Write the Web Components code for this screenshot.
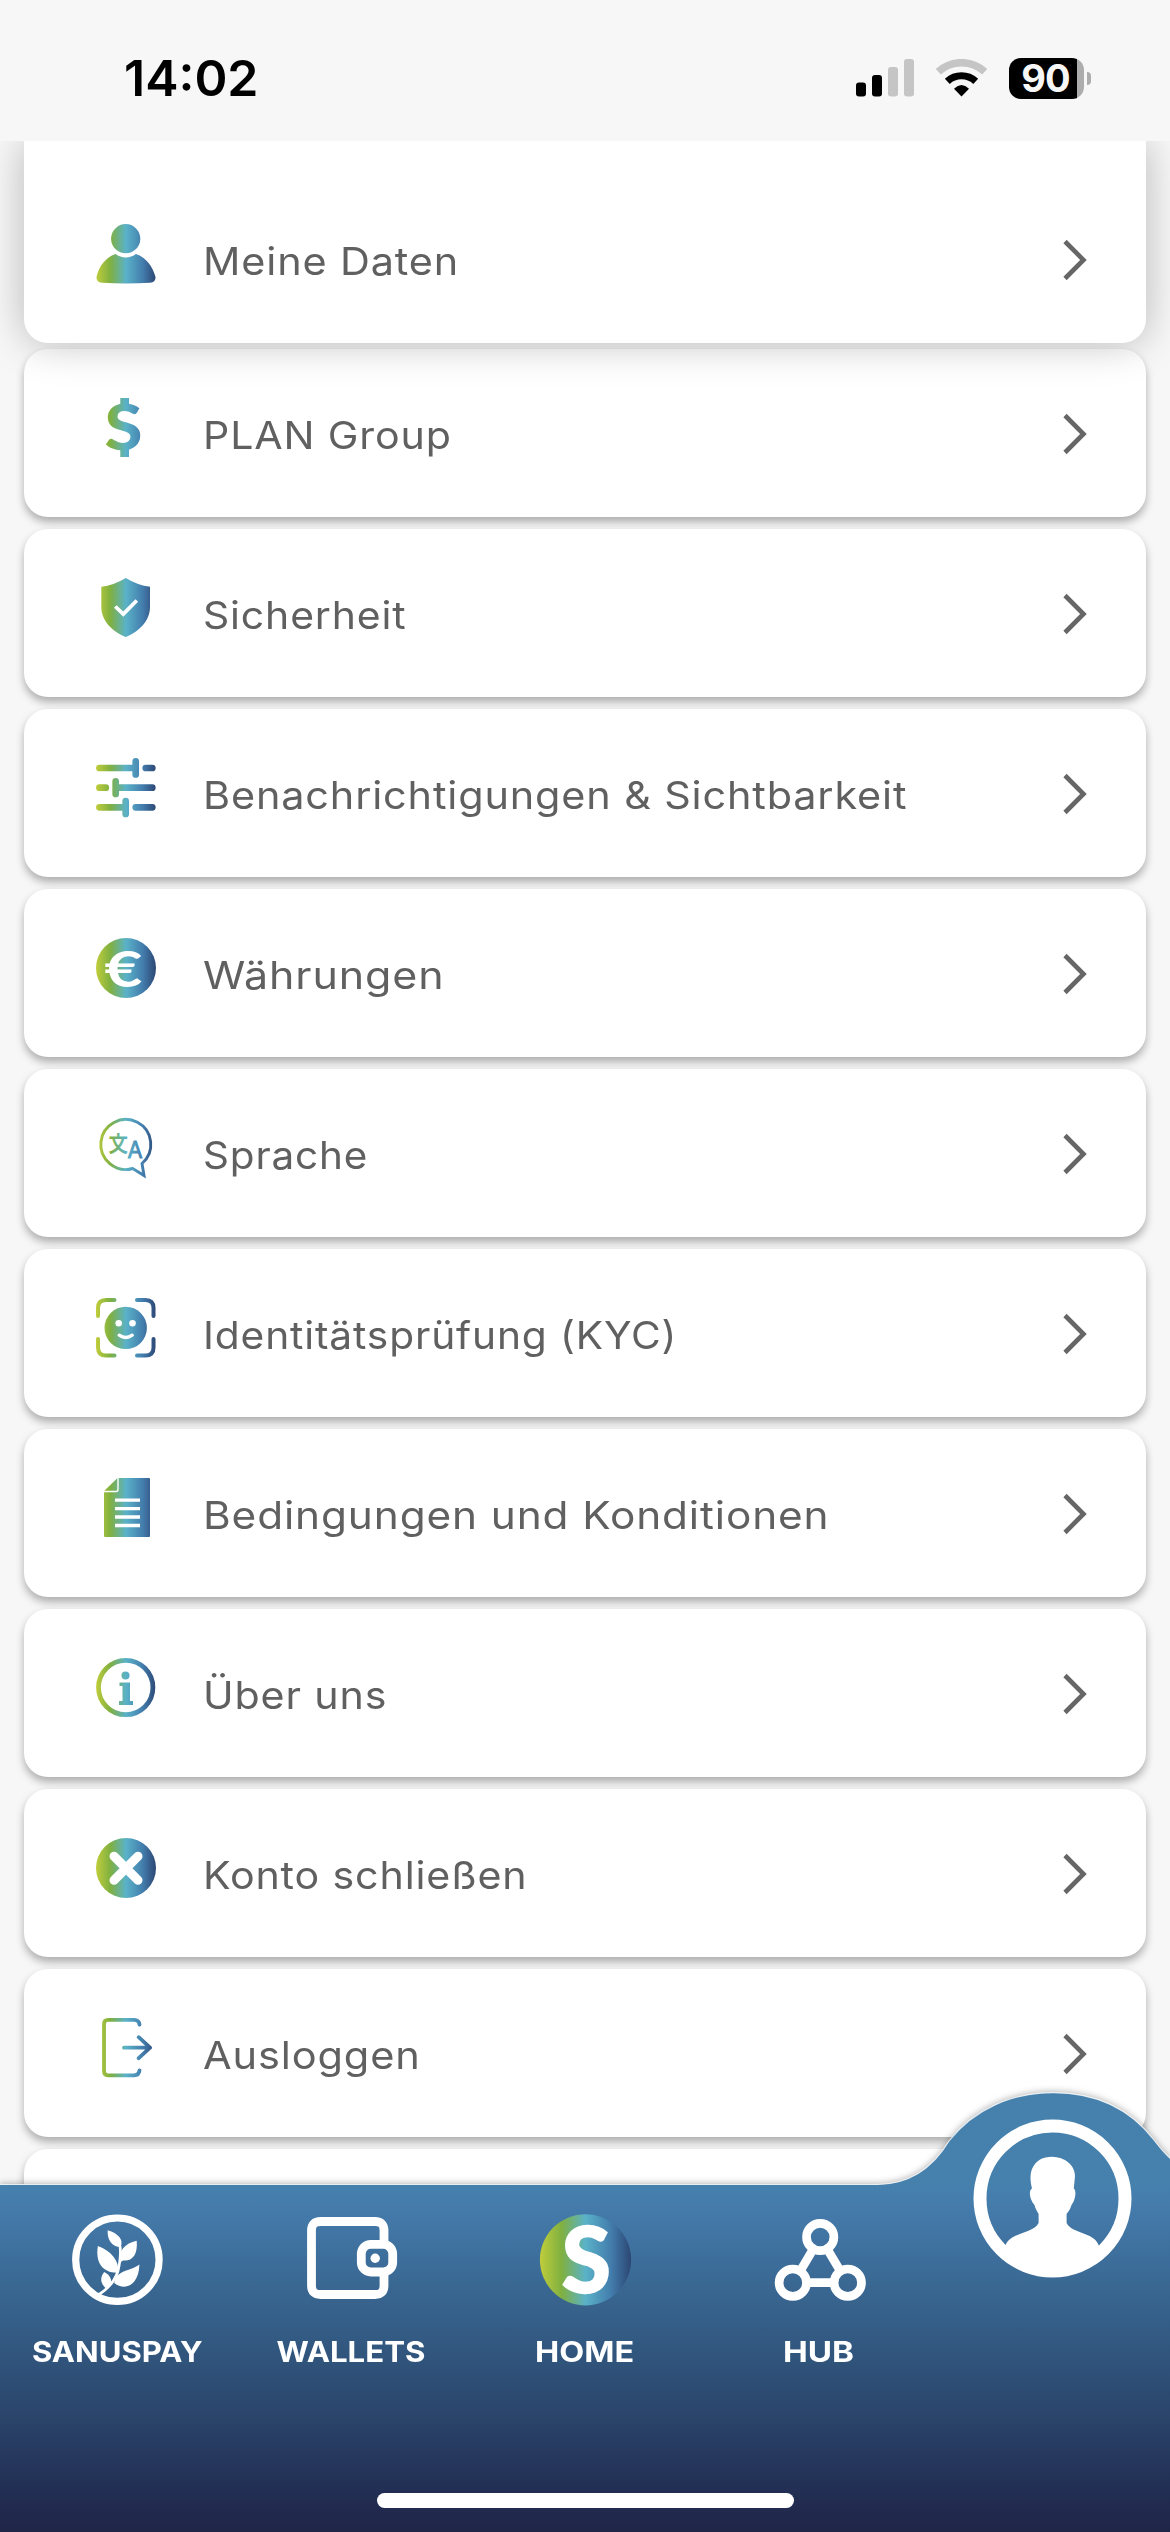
<!DOCTYPE html>
<html lang="de">
<head>
<meta charset="utf-8">
<title>Profil</title>
<style>
  html, body {
    margin: 0;
    height: 2532px;
    overflow: hidden;
    background: #f7f7f7;
  }
  body {
    font-family: Inter, "Noto Sans", sans-serif;
  }
</style>
</head>
<body>
<app-shell>
  <status-bar slot="status" time="14:02" battery="90"></status-bar>
  <settings-row icon="person" width="256" lead>Meine Daten</settings-row>
  <settings-row icon="dollar" width="249">PLAN Group</settings-row>
  <settings-row icon="shield" width="203">Sicherheit</settings-row>
  <settings-row icon="sliders" width="704">Benachrichtigungen &amp; Sichtbarkeit</settings-row>
  <settings-row icon="euro" width="241">Währungen</settings-row>
  <settings-row icon="language" width="165">Sprache</settings-row>
  <settings-row icon="face" width="474">Identitätsprüfung (KYC)</settings-row>
  <settings-row icon="document" width="627">Bedingungen und Konditionen</settings-row>
  <settings-row icon="info" width="184">Über uns</settings-row>
  <settings-row icon="close" width="324">Konto schließen</settings-row>
  <settings-row icon="logout" width="218">Ausloggen</settings-row>
  <settings-row></settings-row>
  <tab-bar slot="tabs">
    <tab-item icon="plant" width="171">SANUSPAY</tab-item>
    <tab-item icon="wallet" width="149">WALLETS</tab-item>
    <tab-item icon="home" width="99">HOME</tab-item>
    <tab-item icon="hub" width="71">HUB</tab-item>
    <app-icon slot="profile" name="profile" size="160"></app-icon>
  </tab-bar>
</app-shell>

<script>
// Row icons are drawn on a 60 grid, tab icons on 91, the profile badge on 160.
const icons = {
  person: [60, `
    <circle cx="29.7" cy="14.7" r="14.6"/>
    <path d="M19.5 30C25.5 34.5 34 34.5 40 30C50 33.5 56.5 42 59.5 53Q60 58.3 54 58.8Q30 60 6 58.8Q0 58.3 .5 53C3 42 9.5 33.5 19.5 30Z"/>`],
  dollar: [60, `
    <path d="M24.3 0h8.7v9h-8.7zM24.3 50h8.7v9h-8.7z"/>
    <text x="8.5" y="52" font-family="Lato" font-weight="900" font-size="62" textLength="38" lengthAdjust="spacingAndGlyphs">S</text>`],
  shield: [60, `
    <path d="M29.8 0Q42 7.5 54 8.7V29C54 43 43 53.5 29.8 59C16.5 53.5 5.3 43 5.3 29V8.7Q17.5 7.5 29.8 0Z"/>
    <path d="M19.3 28.5l8 7.7l13.5-13.7" fill="none" stroke="#fff" stroke-width="3.8"/>`],
  sliders: [60, `
    <g fill="none" stroke="url(#g)" stroke-width="6.7" stroke-linecap="round">
      <path d="M3.4 10H39.7M39.7 3.4V16.5M49.7 10H56.3"/>
      <path d="M3.4 29.7H9.8M19.7 23.3V36M19.7 29.7H56.3"/>
      <path d="M3.4 49.3H29.7M29.7 43.2V56M39.7 49.3H56.3"/>
    </g>`],
  euro: [60, `
    <circle cx="30" cy="30" r="30"/>
    <text x="8.5" y="48.5" fill="#fff" font-family="Lato" font-weight="700" font-size="50" textLength="38" lengthAdjust="spacingAndGlyphs">€</text>`],
  language: [60, `
    <path d="M46 45.5A25 25 0 1 0 36.7 50.5L48 57.5Z" fill="none" stroke="url(#g)" stroke-width="2.9"/>
    <g stroke="url(#g)" stroke-width=".9">
      <text x="13" y="33" font-family="Noto Sans CJK JP" font-size="21" textLength="18.5" lengthAdjust="spacingAndGlyphs">文</text>
      <text x="32" y="40" font-family="Liberation Sans" font-size="23" textLength="14" lengthAdjust="spacingAndGlyphs">A</text>
    </g>`],
  face: [60, `
    <path d="M2 18V10Q2 2 10 2H18.5M41 2H49.5Q57.5 2 57.5 10V18M57.5 41V49.5Q57.5 57.5 49.5 57.5H41M18.5 57.5H10Q2 57.5 2 49.5V41" fill="none" stroke="url(#g)" stroke-width="4" stroke-linecap="round"/>
    <circle cx="29.7" cy="29.9" r="21.2"/>
    <g fill="#fff"><circle cx="22.7" cy="25.3" r="3.3"/><circle cx="36.5" cy="25.3" r="3.3"/></g>
    <path d="M23.2 37.2Q29.7 41.8 36.2 37.2" fill="none" stroke="#fff" stroke-width="3.4" stroke-linecap="round"/>`],
  document: [60, `
    <path d="M21.5 0H53Q54 0 54 1V58Q54 59 53 59H9Q8 59 8 58V13Z"/>
    <g fill="none" stroke="#fff">
      <path d="M22 0V11.5Q22 13.5 20 13.5H8" stroke-width="1.4"/>
      <path d="M19 22.2H44M19 30.7H44M19 39H44M19 47.5H44" stroke-width="3.3"/>
    </g>`],
  info: [60, `
    <circle cx="29.7" cy="29.5" r="27.2" fill="none" stroke="url(#g)" stroke-width="4.8"/>
    <circle cx="29.5" cy="17.5" r="4"/>
    <path d="M23.5 24.5H34V43H37V47H23V43H26.5V28H23.5Z"/>`],
  close: [60, `
    <circle cx="30" cy="30" r="30"/>
    <path d="M18 18.3L42 42.3M42 18.3L18 42.3" stroke="#fff" stroke-width="9" stroke-linecap="round"/>`],
  logout: [60, `
    <path d="M43.5 6.7Q43 1.8 38 1.8H12Q8 1.8 8 6V53Q8 57.3 12 57.3H38Q43 57.3 43.5 52.3M28 29.7H54M42.7 19.2L54 29.7L42.7 40.2" fill="none" stroke="url(#g)" stroke-width="3.8" stroke-linecap="round" stroke-linejoin="round"/>`],
  plant: [91, `
    <circle cx="45.4" cy="45.7" r="41.7" fill="none" stroke="#fff" stroke-width="7.2"/>
    <g fill="#fff">
      <path d="M35.7 16.3C46 19 52 26 48.6 33C40 33 35 26 35.7 16.3Z"/>
      <path d="M25.9 32C39 37 47 46 46.5 58.7C31 59.5 23 49 25.9 32Z"/>
      <path d="M64.7 26.7C66 41 60 47.5 51 46.5L47.5 49C46 37 53 29 64.7 26.7Z"/>
      <path d="M67.4 50.5C67 70 54 78 42.2 69C45 55 58 58 67.4 50.5Z"/>
      <path d="M32.2 58C38 61 41 66 38 72L33.5 74C28 69 28 63 32.2 58Z"/>
    </g>
    <path d="M27 80.5C37 74 43 67 46 57C48 48 49 39 48 32" fill="none" stroke="#fff" stroke-width="2.7"/>`],
  wallet: [91, `
    <g fill="none" stroke="#fff" stroke-width="8.8">
      <path d="M78 27V16.5Q78 7.5 69 7.5H14.500Q5.500 7.500 5.500 16.5V71.5Q5.500 80.5 14.500 80.5H69Q78 80.5 78 71.5V61"/>
      <rect x="55.3" y="30.3" width="31.4" height="27.7" rx="9.500"/>
    </g>
    <circle cx="69.2" cy="44.3" r="4.7" fill="#fff"/>`],
  home: [91, `
    <circle cx="45.5" cy="45.8" r="45.6"/>
    <text x="21.5" y="79.2" fill="#fff" stroke="#fff" stroke-width="1.5" font-family="Lato" font-weight="900" font-size="92" textLength="49.5" lengthAdjust="spacingAndGlyphs">S</text>`],
  hub: [91, `
    <g fill="none" stroke="#fff" stroke-width="8.7">
      <circle cx="46.2" cy="23" r="13.7"/>
      <circle cx="18.8" cy="68.7" r="13.7"/>
      <circle cx="73.8" cy="68.7" r="13.7"/>
      <path d="M39 35.5L26.5 56.5M53.5 35.5L66 56.5M32.5 68.7H60"/>
    </g>`],
  profile: [160, `
    <circle cx="79.5" cy="79.5" r="72.5" fill="none" stroke="#fff" stroke-width="13"/>
    <path fill="#fff" d="M79 37.7C92 38 102 46 102 57L100.8 69.5C104 72 102 82 98.5 86C97 91 95 93 93.6 95V104C99 115 121 113 125.6 126C128 130 118 152 79.5 152S31 130 32.5 126C38 113 60 115 65.6 104V95C64 92 62 89 61.5 86C57 81 55 72 59 69.5C57 62 57 55 59 50C63 41 70 37.7 79 37.7Z"/>`]
};

// Stretches a label to the width given on its host element.
function fitLabel(host) {
  const span = host.shadowRoot.querySelector('.text');
  const width = Number(host.getAttribute('width'));
  if (!span || !width) return;
  span.style.transform = `scaleX(${width / span.offsetWidth})`;
}

class AppIcon extends HTMLElement {
  constructor() {
    super();
    this.attachShadow({ mode: 'open' });
  }

  connectedCallback() {
    const [grid, shapes] = icons[this.getAttribute('name')] || [60, ''];
    const size = this.getAttribute('size') || grid;
    this.shadowRoot.innerHTML = `
      <style>
        :host { display: block; flex: none; }
        svg { display: block; overflow: visible; }
      </style>
      <svg width="${size}" height="${size}" viewBox="0 0 ${grid} ${grid}" fill="url(#g)">
        <defs>
          <linearGradient id="g" gradientUnits="userSpaceOnUse" x1="0" x2="${grid}" y1="0" y2="0">
            <stop offset="0" stop-color="#c0cd3b"/>
            <stop offset=".24" stop-color="#7fb041"/>
            <stop offset=".5" stop-color="#5ab2c8"/>
            <stop offset=".78" stop-color="#437dad"/>
            <stop offset="1" stop-color="#2c4673"/>
          </linearGradient>
        </defs>
        ${shapes}
      </svg>
    `;
  }
}

class StatusBar extends HTMLElement {
  constructor() {
    super();
    this.attachShadow({ mode: 'open' });
  }

  connectedCallback() {
    this.shadowRoot.innerHTML = `
      <style>
        :host {
          display: flex;
          align-items: center;
          justify-content: space-between;
          box-sizing: border-box;
          height: 141px;
          padding: 15px 79px 0 124px;
          background: #f7f7f7;
          color: #000;
        }
        .time {
          font-size: 50px;
          font-weight: 600;
          line-height: 60px;
        }
        .right {
          display: flex;
          align-items: center;
          gap: 22px;
        }
        svg { display: block; }
        .battery {
          display: flex;
          align-items: center;
          gap: 3px;
        }
        .cell {
          box-sizing: border-box;
          width: 75px;
          height: 41px;
          padding-right: 2px;
          border-radius: 12px;
          background: linear-gradient(90deg, #000 68px, #adadad 68px);
          color: #f7f7f7;
          font-size: 38px;
          font-weight: 700;
          line-height: 41px;
          letter-spacing: -1px;
          text-align: center;
        }
        .nub {
          width: 4px;
          height: 13px;
          border-radius: 0 6px 6px 0;
          background: #adadad;
        }
      </style>
      <span class="time">${this.getAttribute('time')}</span>
      <div class="right">
        <svg width="58" height="38" viewBox="0 0 58 38">
          <rect y="23.5" width="10" height="14" rx="3"/>
          <rect x="16" y="16" width="10" height="21.5" rx="3"/>
          <rect x="32" y="8" width="10" height="29.5" rx="3" fill="#c5c5c5"/>
          <rect x="48" width="10" height="37.5" rx="3" fill="#c5c5c5"/>
        </svg>
        <svg width="51" height="38" viewBox="0 0 51 38">
          <path d="M2.3 12.8A34 34 0 0 1 48.7 12.8" fill="none" stroke="#c5c5c5" stroke-width="7.5"/>
          <path d="M11.3 22.3A21 21 0 0 1 39.7 22.3" fill="none" stroke="#000" stroke-width="7.2"/>
          <path d="M25.5 37.5L18 29.7Q25.5 22.5 33 29.7Z"/>
        </svg>
        <div class="battery">
          <div class="cell">${this.getAttribute('battery')}</div>
          <div class="nub"></div>
        </div>
      </div>
    `;
  }
}

class SettingsRow extends HTMLElement {
  constructor() {
    super();
    this.attachShadow({ mode: 'open' });
  }

  connectedCallback() {
    this.render();
    fitLabel(this);
  }

  render() {
    const icon = this.getAttribute('icon');
    this.shadowRoot.innerHTML = `
      <style>
        :host {
          display: flex;
          align-items: center;
          flex: none;
          box-sizing: border-box;
          height: 168px;
          margin: 0 24px 12px;
          padding: 0 59px 0 72px;
          border-radius: 24px;
          background: #fff;
          box-shadow: 0 5px 9px rgba(0, 0, 0, .3);
          color: #606060;
        }
        :host([lead]) {
          position: relative;
          z-index: 1;
          height: 202px;
          margin-bottom: 6px;
          padding-top: 34px;
          border-radius: 0 0 24px 24px;
          box-shadow: 0 0 42px rgba(0, 0, 0, .26);
        }
        app-icon { margin-bottom: 11px; }
        .label {
          flex: 1;
          margin: 4px 0 0 47px;
          font-size: 38.5px;
          line-height: 48px;
          white-space: nowrap;
        }
        .text {
          display: inline-block;
          letter-spacing: .8px;
          transform-origin: left;
        }
        .chevron {
          flex: none;
          margin-top: 2px;
        }
      </style>
      ${icon ? `
        <app-icon name="${icon}"></app-icon>
        <div class="label"><span class="text"><slot></slot></span></div>
        <svg class="chevron" width="26" height="42" viewBox="0 0 26 42">
          <path d="M4 2.5L22.5 21L4 39.5" fill="none" stroke="#666" stroke-width="4.6"/>
        </svg>` : ''}
    `;
  }
}

class TabItem extends HTMLElement {
  constructor() {
    super();
    this.attachShadow({ mode: 'open' });
  }

  connectedCallback() {
    this.render();
    fitLabel(this);
  }

  render() {
    this.shadowRoot.innerHTML = `
      <style>
        :host {
          display: flex;
          flex-direction: column;
          align-items: center;
          gap: 30px;
          padding-top: 30px;
          color: #fff;
          font-size: 28.5px;
          font-weight: 700;
          line-height: 34px;
          white-space: nowrap;
        }
        .text { display: inline-block; }
      </style>
      <app-icon name="${this.getAttribute('icon')}"></app-icon>
      <span class="text"><slot></slot></span>
    `;
  }
}

class TabBar extends HTMLElement {
  constructor() {
    super();
    this.attachShadow({ mode: 'open' });
  }

  connectedCallback() {
    this.shadowRoot.innerHTML = `
      <style>
        :host {
          display: flex;
          flex-direction: column;
          justify-content: space-between;
          position: relative;
          z-index: 2;
          height: 348px;
        }
        /* bar background with the bump behind the profile badge */
        .shape {
          position: absolute;
          left: 0;
          bottom: 0;
          filter: drop-shadow(0 -1px 3px rgba(0, 0, 0, .28));
        }
        .tabs {
          display: grid;
          grid-template-columns: repeat(5, 1fr);
          position: relative;
        }
        .profile {
          justify-self: center;
          margin-top: -65px;
          height: 0;
        }
        .indicator {
          position: relative;
          align-self: center;
          width: 417px;
          height: 15px;
          margin-bottom: 24px;
          border-radius: 8px;
          background: #fff;
        }
      </style>
      <svg class="shape" width="1170" height="440" viewBox="0 0 1170 440">
        <defs>
          <linearGradient id="bar" x1="0" x2="0" y1="92" y2="440" gradientUnits="userSpaceOnUse">
            <stop offset="0" stop-color="#4681ae"/>
            <stop offset=".08" stop-color="#447aaa"/>
            <stop offset=".38" stop-color="#356089"/>
            <stop offset=".68" stop-color="#2a4369"/>
            <stop offset=".86" stop-color="#233056"/>
            <stop offset="1" stop-color="#1f2547"/>
          </linearGradient>
        </defs>
        <path d="M-10 92.5H878C912 92 934 74 949 49C974 17 1012 .7 1053 .7C1096 .7 1130 17 1154 48C1160 56 1165 62 1171 67V450H-10Z" fill="url(#bar)" stroke="#fff" stroke-opacity=".8" stroke-width="1.2"/>
      </svg>
      <div class="tabs">
        <slot></slot>
        <div class="profile"><slot name="profile"></slot></div>
      </div>
      <div class="indicator"></div>
    `;
  }
}

class AppShell extends HTMLElement {
  constructor() {
    super();
    this.attachShadow({ mode: 'open' });
  }

  connectedCallback() {
    this.shadowRoot.innerHTML = `
      <style>
        :host {
          display: flex;
          flex-direction: column;
          width: 1170px;
          height: 2532px;
          overflow: hidden;
        }
        main {
          display: flex;
          flex-direction: column;
          flex: 1;
          min-height: 0;
          overflow: hidden;
        }
      </style>
      <slot name="status"></slot>
      <main><slot></slot></main>
      <slot name="tabs"></slot>
    `;
  }
}

customElements.define('app-shell', AppShell);
customElements.define('app-icon', AppIcon);
customElements.define('status-bar', StatusBar);
customElements.define('settings-row', SettingsRow);
customElements.define('tab-item', TabItem);
customElements.define('tab-bar', TabBar);
</script>
</body>
</html>
